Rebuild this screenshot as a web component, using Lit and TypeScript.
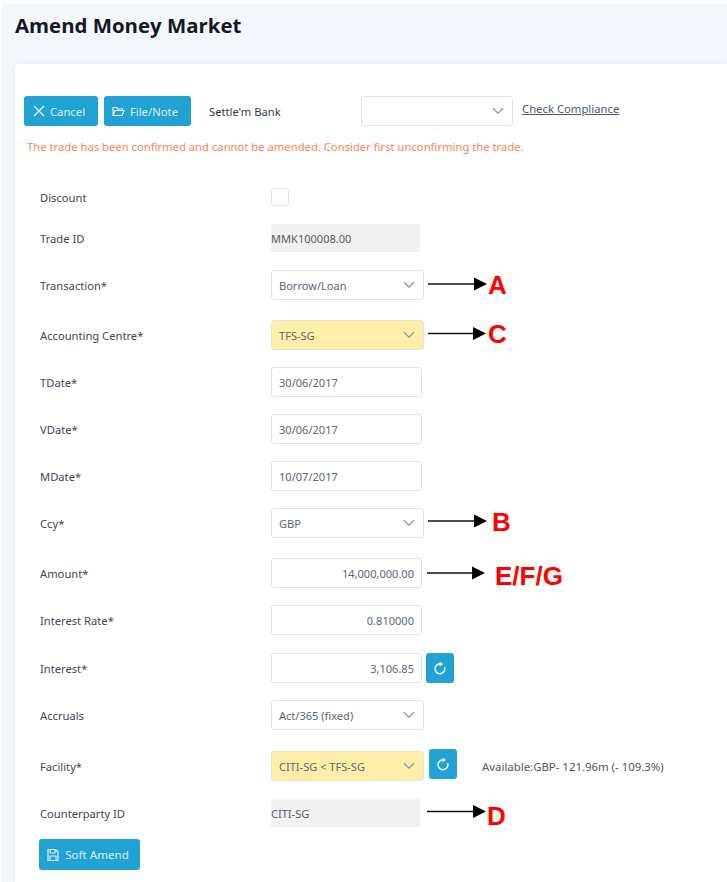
import { LitElement, html, css, svg } from "lit";
import { customElement } from "lit/decorators.js";

const chevron = html`<svg class="chev" viewBox="0 0 12 8" width="12" height="8"><path d="M1 1.2 6 6.2 11 1.2" fill="none" stroke="#8794a8" stroke-width="1.3"/></svg>`;
const refresh = html`<svg viewBox="0 0 16 16" width="16" height="16"><path d="M12.6 7.2A4.9 4.9 0 1 1 8 3.9" fill="none" stroke="#e6f5fb" stroke-width="1.6"/><path d="M7.6 1.4 11.2 3.9 7.6 6.4Z" fill="#e6f5fb"/></svg>`;

type Note = { t: string; x: number; len: number; arrowDy: number; gap: number; letterDy: number };
type Row = {
  label: string; kind: "input" | "select" | "ro" | "check";
  value?: string; right?: boolean; hi?: boolean; h: number;
  note?: Note; refresh?: boolean; extra?: string;
};

const rows: Row[] = [
  { label: "Discount", kind: "check", h: 41 },
  { label: "Trade ID", kind: "ro", value: "MMK100008.00", h: 47 },
  { label: "Transaction*", kind: "select", value: "Borrow/Loan", h: 50, note: { t: "A", x: 4, len: 59, arrowDy: -1, gap: 1, letterDy: 0 } },
  { label: "Accounting Centre*", kind: "select", value: "TFS-SG", hi: true, h: 47, note: { t: "C", x: 4, len: 58, arrowDy: -1.5, gap: 2, letterDy: -1.5 } },
  { label: "TDate*", kind: "input", value: "30/06/2017", h: 47 },
  { label: "VDate*", kind: "input", value: "30/06/2017", h: 47 },
  { label: "MDate*", kind: "input", value: "10/07/2017", h: 47 },
  { label: "Ccy*", kind: "select", value: "GBP", h: 50, note: { t: "B", x: 4, len: 59, arrowDy: -2, gap: 5, letterDy: -1.5 } },
  { label: "Amount*", kind: "input", value: "14,000,000.00", right: true, h: 47, note: { t: "E/F/G", x: 5, len: 58, arrowDy: 0, gap: 10, letterDy: 3 } },
  { label: "Interest Rate*", kind: "input", value: "0.810000", right: true, h: 48 },
  { label: "Interest*", kind: "input", value: "3,106.85", right: true, h: 47, refresh: true },
  { label: "Accruals", kind: "select", value: "Act/365 (fixed)", h: 51 },
  { label: "Facility*", kind: "select", value: "CITI-SG < TFS-SG", hi: true, h: 47, refresh: true, extra: "Available:GBP- 121.96m (- 109.3%)" },
  { label: "Counterparty ID", kind: "ro", value: "CITI-SG", h: 41, note: { t: "D", x: 7, len: 59, arrowDy: -1.5, gap: 1, letterDy: 3 } },
];

@customElement("app-root")
export class AppRoot extends LitElement {
  static styles = css`
    :host { display: block; width: 727px; height: 882px; overflow: hidden; background: #fff; font-family: "Noto Sans", "Open Sans", sans-serif; font-size: 11.2px; color: #3d4450; }
    .page { margin: 4px 0 0 2px; height: 878px; background: #f3f6fa; box-sizing: border-box; padding: 0 0 0 13px; display: flex; flex-direction: column; }
    h1 { margin: 0; height: 60px; box-sizing: border-box; padding-top: 9px; font: 700 20.4px/24px "Open Sans", "Noto Sans", sans-serif; color: #14181f; }
    .card { flex: 1; background: #fff; border-radius: 4px 0 0 0; box-shadow: 0 0 6px rgba(40,60,90,.07); padding: 32px 0 0 9px; }
    .top { display: flex; align-items: center; height: 30px; }
    .btn { display: inline-flex; align-items: center; justify-content: center; box-sizing: border-box; height: 30px; gap: 5px; background: #22a2d3; color: #d9f0f9; border: 0; border-radius: 3px; font: inherit; font-size: 11.3px; padding: 0; }
    .cancel { width: 74px; padding-right: 4px; }
    .file { width: 87px; margin-left: 6px; padding-right: 5px; }
    .settle { margin-left: 18px; width: 152px; color: #333a44; }
    .sel { box-sizing: border-box; display: flex; align-items: center; justify-content: space-between; height: 30px; border: 1px solid #dde3ec; border-radius: 3px; background: #fff; padding: 0 8px 0 7px; color: #5d6676; font-size: 11.05px; }
    .sel.hi { background: #ffeeaa; border-color: #ebe3c3; color: #5f6470; }
    .bank { width: 152px; }
    .check-link { margin-left: 9px; margin-top: -6px; color: #4c5870; text-decoration: underline; font-size: 11.3px; }
    .warn { color: #ff7f56; font-size: 11.25px; margin: 13px 0 0 3px; height: 15px; line-height: 15px; white-space: nowrap; }
    .form { padding: 28px 0 0 15px; }
    .row { display: grid; grid-template-columns: 232px 1fr; align-items: start; }
    .row label { color: #3f4652; line-height: 32px; padding-left: 1px; }
    .ctl { display: flex; align-items: center; height: 30px; }
    .ctl .sel { width: 153px; flex: none; }
    .inp { box-sizing: border-box; flex: none; display: flex; align-items: center; width: 151px; height: 30px; border: 1px solid #dde3ec; border-radius: 3px; padding: 0 7px; color: #5d6676; font-size: 11.05px; }
    .inp.right { justify-content: flex-end; }
    .ro { box-sizing: border-box; flex: none; display: flex; align-items: center; width: 149px; height: 28px; background: #f1f1f1; color: #555c66; font-size: 11.05px; }
    .check { box-sizing: border-box; width: 18px; height: 18px; border: 1px solid #dde3ec; border-radius: 3px; }
    .icon-btn { width: 28px; margin-left: 4px; }
    .sel + .icon-btn { margin-left: 5px; margin-top: -4px; }
    .extra { margin-left: 25px; font-size: 11.4px; color: #4f5661; white-space: nowrap; }
    .note { display: flex; align-items: center; flex: none; }
    .note svg { display: block; }
    .note b { font: 700 26px/24px "Liberation Sans", Arial, sans-serif; color: #ff0000; }
    .submit { width: 101px; height: 31px; margin-top: 0; gap: 6px; font-size: 11.6px; padding-right: 3px; }
  `;

  private annotation(r: Row) {
    const n = r.note;
    if (!n) return null;
    return html`<span class="note" style="margin-left:${n.x}px">
      <svg width="${n.len}" height="14" viewBox="0 0 ${n.len} 14" style="transform:translateY(${n.arrowDy}px)">${svg`<path d="M0 7H${n.len - 12}" stroke="#111" stroke-width="1.4"/><path d="M${n.len - 13} 0.5 ${n.len} 7 ${n.len - 13} 13.5Z" fill="#000"/>`}</svg>
      <b style="margin-left:${n.gap}px;transform:translateY(${n.letterDy}px)">${n.t}</b></span>`;
  }

  private control(r: Row) {
    switch (r.kind) {
      case "check": return html`<div class="check"></div>`;
      case "ro": return html`<div class="ro">${r.value}</div>`;
      case "select": return html`<div class="sel ${r.hi ? "hi" : ""}">${r.value}${chevron}</div>`;
      default: return html`<div class="inp ${r.right ? "right" : ""}">${r.value}</div>`;
    }
  }

  render() {
    return html`<div class="page">
      <h1>Amend Money Market</h1>
      <div class="card">
        <div class="top">
          <button class="btn cancel"><svg width="12" height="12" viewBox="0 0 12 12"><path d="M1 1 11 11M11 1 1 11" stroke="#e6f5fb" stroke-width="1.2"/></svg>Cancel</button>
          <button class="btn file"><svg width="13" height="11" viewBox="0 0 13 11"><path d="M1 9.5V1.5H4.5L6 3H10.5V4.5M1 9.5H10L12 4.5H3L1 9.5Z" fill="none" stroke="#e6f5fb" stroke-width="1.2"/></svg>File/Note</button>
          <span class="settle">Settle'm Bank</span>
          <div class="sel bank"><span></span>${chevron}</div>
          <span class="check-link">Check Compliance</span>
        </div>
        <div class="warn">The trade has been confirmed and cannot be amended. Consider first unconfirming the trade.</div>
        <div class="form">
          ${rows.map((r) => html`<div class="row" style="height:${r.h}px">
            <label>${r.label}</label>
            <div class="ctl">${this.control(r)}
              ${r.refresh ? html`<button class="btn icon-btn">${refresh}</button>` : null}
              ${r.extra ? html`<span class="extra">${r.extra}</span>` : null}
              ${this.annotation(r)}
            </div>
          </div>`)}
          <button class="btn submit"><svg width="12" height="14" viewBox="0 0 12 14"><path d="M1 1.5H8.5L11 4V12.5H1Z M3.2 1.5V5H8V1.5 M3 12.5V8H9V12.5" fill="none" stroke="#d9f0f9" stroke-width="1.2"/></svg>Soft Amend</button>
        </div>
      </div>
    </div>`;
  }
}
